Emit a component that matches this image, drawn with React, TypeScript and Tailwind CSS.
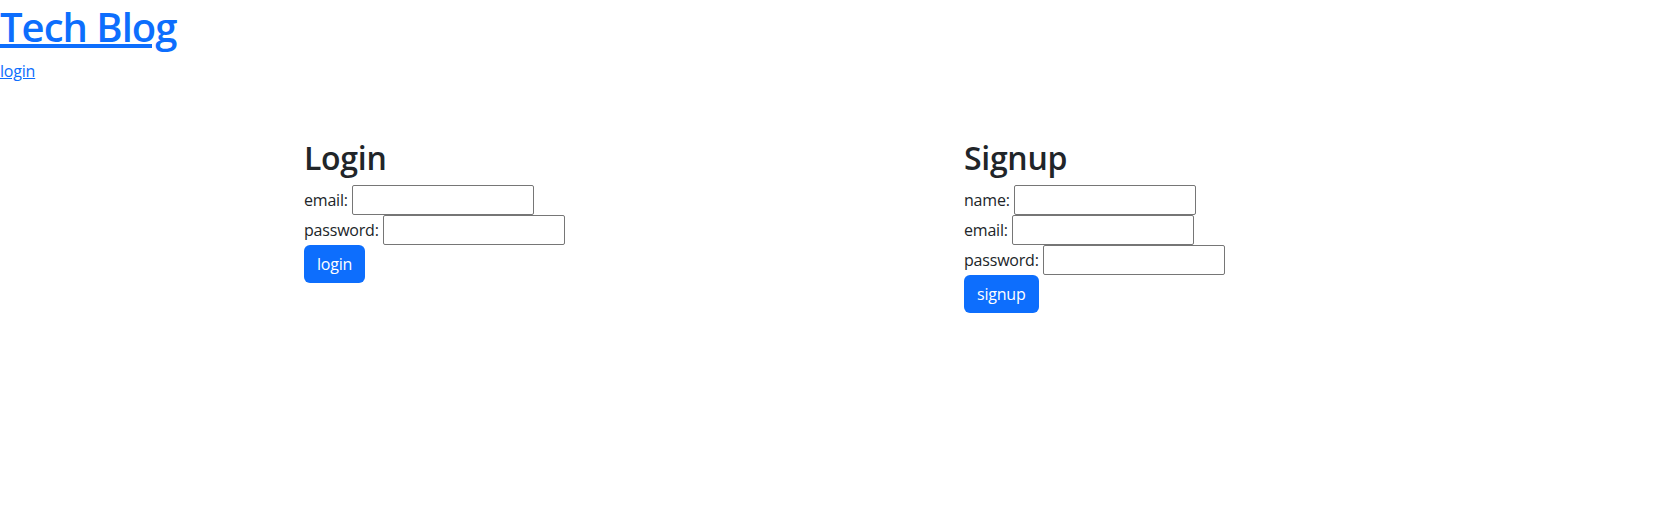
const inputClass =
  "w-[182px] h-[30px] border border-[#767676] rounded-[2px] px-[2px] align-middle bg-white";

const Field = ({ label, type = "text" }: { label: string; type?: string }) => (
  <div className="h-[30px] flex items-center">
    <label className="mr-[4px]">{label}:</label>
    <input type={type} className={inputClass} />
  </div>
);

export default function App() {
  return (
    <div className="min-h-screen bg-white text-[#212529] font-['Open_Sans','Noto_Sans',sans-serif] text-base leading-6 tracking-[-0.2px]">
      {/* header */}
      <header className="pt-[3px]">
        <h1 className="text-[40px] leading-[48px] font-semibold tracking-[-1px] mb-2">
          <a href="#" className="text-[#0d6efd] underline">
            Tech Blog
          </a>
        </h1>
        <a href="#" className="text-[#0d6efd] underline">
          login
        </a>
      </header>

      {/* forms */}
      <main className="flex pl-[304px] mt-[56px]">
        <section className="w-[660px]">
          <h2 className="text-[32px] leading-[38px] font-semibold tracking-[-0.3px] mb-2">Login</h2>
          <Field label="email" />
          <Field label="password" type="password" />
          <button className="h-[38px] px-[13px] bg-[#0d6efd] text-white rounded-md">
            login
          </button>
        </section>
        <section className="w-[660px]">
          <h2 className="text-[32px] leading-[38px] font-semibold tracking-[-0.3px] mb-2">Signup</h2>
          <Field label="name" />
          <Field label="email" />
          <Field label="password" type="password" />
          <button className="h-[38px] px-[13px] bg-[#0d6efd] text-white rounded-md">
            signup
          </button>
        </section>
      </main>
    </div>
  );
}
